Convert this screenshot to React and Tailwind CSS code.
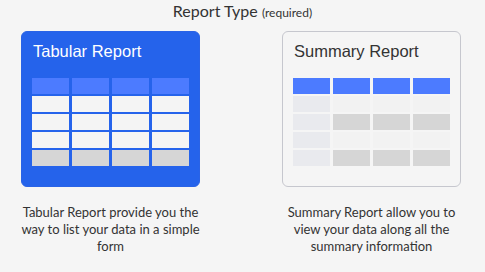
const lato = { fontFamily: 'Lato, "Open Sans", sans-serif' };

function Cell({ className }) {
  return <div className={`h-[16px] ${className}`} />;
}

function TabularGrid() {
  const rows = [
    'bg-[#4c7bff]',
    'bg-[#f4f4f4]',
    'bg-[#f4f4f4]',
    'bg-[#f4f4f4]',
    'bg-[#d6d6d6]',
  ];
  return (
    <div className="grid grid-cols-4 gap-x-[2.5px] gap-y-[2px]">
      {rows.map((bg, r) =>
        [0, 1, 2, 3].map((c) => <Cell key={`${r}-${c}`} className={bg} />)
      )}
    </div>
  );
}

function SummaryGrid() {
  const rows = [
    ['bg-[#4c7bff]', 'bg-[#4c7bff]'],
    ['bg-[#e9eaee]', 'bg-[#f2f2f2]'],
    ['bg-[#e9eaee]', 'bg-[#d6d6d6]'],
    ['bg-[#e9eaee]', 'bg-[#f2f2f2]'],
    ['bg-[#e9eaee]', 'bg-[#d6d6d6]'],
  ];
  return (
    <div className="grid grid-cols-4 gap-x-[2.5px] gap-y-[2px]">
      {rows.map(([first, rest], r) =>
        [0, 1, 2, 3].map((c) => (
          <Cell key={`${r}-${c}`} className={c === 0 ? first : rest} />
        ))
      )}
    </div>
  );
}

function ReportOption({ title, description, selected, children }) {
  return (
    <div className="flex w-[179px] flex-col items-center">
      <div
        className={`h-[156px] w-[179px] rounded-[6px] border px-[10px] pt-[10px] ${
          selected
            ? 'border-[#2a63e6] bg-[#2563eb] text-white'
            : 'border-[#c6c7ce] bg-[#f5f5f5] text-[#333333]'
        }`}
      >
        <h3
          className="mb-[18px] pl-[1px] text-[16.5px] leading-[18px]"
          style={{ fontFamily: '"Liberation Sans", Arial, sans-serif' }}
        >
          {title}
        </h3>
        {children}
      </div>
      <p
        className="mt-[17px] text-center text-[13px] leading-[17px] text-[#333333]"
        style={lato}
      >
        {description}
      </p>
    </div>
  );
}

export default function App() {
  return (
    <div className="h-[272px] w-[485px] bg-[#f5f5f5] pt-[1px]">
      <div className="text-center leading-[20px] text-[#333333]" style={lato}>
        <span className="text-[16px]">Report Type</span>{' '}
        <span className="text-[12px]">(required)</span>
      </div>
      <div className="mt-[8px] flex gap-[82px] pl-[21px]">
        <ReportOption
          selected
          title="Tabular Report"
          description="Tabular Report provide you the way to list your data in a simple form"
        >
          <TabularGrid />
        </ReportOption>
        <ReportOption
          title="Summary Report"
          description="Summary Report allow you to view your data along all the summary information"
        >
          <SummaryGrid />
        </ReportOption>
      </div>
    </div>
  );
}
